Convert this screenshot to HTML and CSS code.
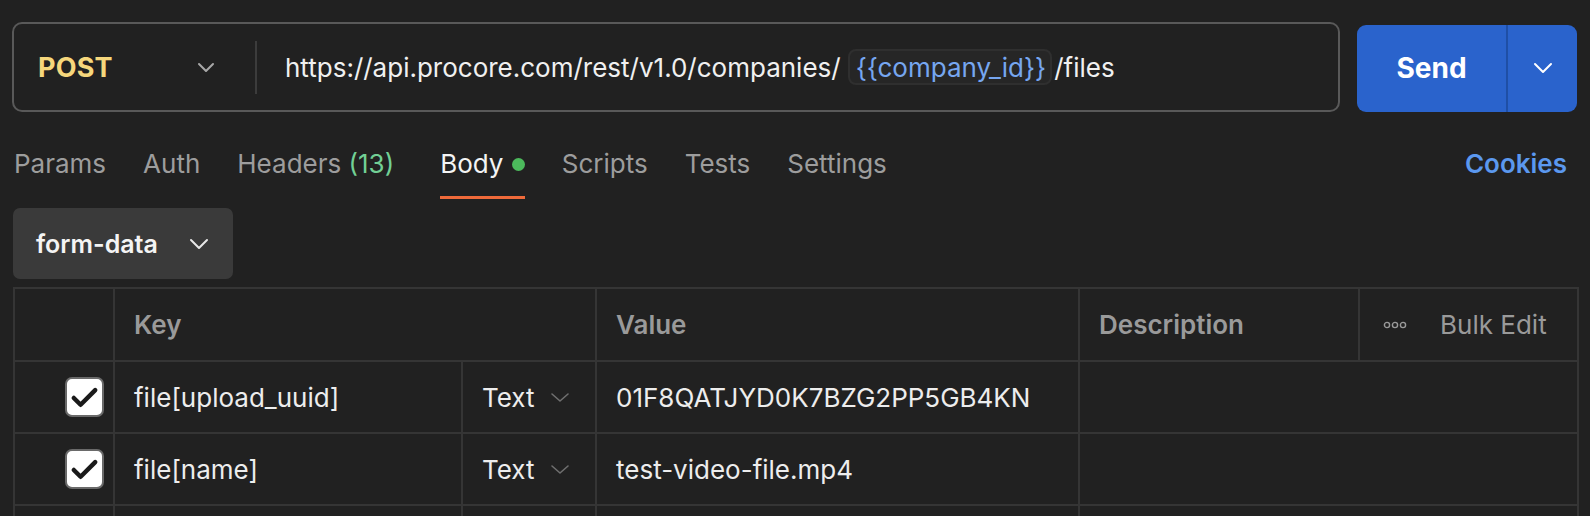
FILE: index.html
```html
<!DOCTYPE html>
<html>
<head>
<meta charset="utf-8">
<link rel="stylesheet" href="styles.css">
</head>
<body>
<div class="top">
  <div class="urlbar">
    <div class="method">
      <span class="method-name">POST</span>
      <svg class="chev" width="18" height="11" viewBox="0 0 18 11"><polyline points="2,2 9,9 16,2" fill="none" stroke="#a8a8a8" stroke-width="2" stroke-linecap="round" stroke-linejoin="round"/></svg>
    </div>
    <div class="vdiv"></div>
    <div class="url">
      <span>https://api.procore.com/rest/v1.0/companies/</span><span class="var">{{company_id}}</span><span>/files</span>
    </div>
  </div>
  <div class="send">
    <div class="send-main">Send</div>
    <div class="send-arrow">
      <svg width="20" height="12" viewBox="0 0 20 12"><polyline points="2,2 10,10 18,2" fill="none" stroke="#ffffff" stroke-width="2" stroke-linecap="round" stroke-linejoin="round"/></svg>
    </div>
  </div>
</div>

<div class="tabs">
  <div class="tab">Params</div>
  <div class="tab">Auth</div>
  <div class="tab">Headers <span class="count">(13)</span></div>
  <div class="tab active">Body <span class="dot"></span></div>
  <div class="tab">Scripts</div>
  <div class="tab">Tests</div>
  <div class="tab">Settings</div>
  <div class="spacer"></div>
  <div class="cookies">Cookies</div>
</div>

<div class="mode">
  <span>form-data</span>
  <svg width="20" height="12" viewBox="0 0 20 12"><polyline points="2,2 10,10 18,2" fill="none" stroke="#e8e8e8" stroke-width="2" stroke-linecap="round" stroke-linejoin="round"/></svg>
</div>

<table class="grid">
  <colgroup>
    <col class="c-check">
    <col class="c-key">
    <col class="c-type">
    <col class="c-value">
    <col class="c-desc">
    <col class="c-bulk">
  </colgroup>
  <tr class="head">
    <th></th>
    <th colspan="2">Key</th>
    <th>Value</th>
    <th>Description</th>
    <th class="bulk">
      <div class="bulk-inner">
        <svg width="24" height="8" viewBox="0 0 24 8"><circle cx="4" cy="4" r="2.6" fill="none" stroke="#9a9a9a" stroke-width="1.4"/><circle cx="12" cy="4" r="2.6" fill="none" stroke="#9a9a9a" stroke-width="1.4"/><circle cx="20" cy="4" r="2.6" fill="none" stroke="#9a9a9a" stroke-width="1.4"/></svg>
        <span>Bulk Edit</span>
      </div>
    </th>
  </tr>
  <tr class="row">
    <td class="check"><span class="box"><svg width="36" height="36" viewBox="0 0 36 36"><polyline points="7,19 14,26 29,11" fill="none" stroke="#1a1a1a" stroke-width="4.6" stroke-linecap="round" stroke-linejoin="round"/></svg></span></td>
    <td>file[upload_uuid]</td>
    <td><div class="type"><span>Text</span><svg width="20" height="11" viewBox="0 0 20 11"><polyline points="2,2 10,9 18,2" fill="none" stroke="#6f6f6f" stroke-width="1.6" stroke-linecap="round" stroke-linejoin="round"/></svg></div></td>
    <td>01F8QATJYD0K7BZG2PP5GB4KN</td>
    <td colspan="2"></td>
  </tr>
  <tr class="row">
    <td class="check"><span class="box"><svg width="36" height="36" viewBox="0 0 36 36"><polyline points="7,19 14,26 29,11" fill="none" stroke="#1a1a1a" stroke-width="4.6" stroke-linecap="round" stroke-linejoin="round"/></svg></span></td>
    <td>file[name]</td>
    <td><div class="type"><span>Text</span><svg width="20" height="11" viewBox="0 0 20 11"><polyline points="2,2 10,9 18,2" fill="none" stroke="#6f6f6f" stroke-width="1.6" stroke-linecap="round" stroke-linejoin="round"/></svg></div></td>
    <td>test-video-file.mp4</td>
    <td colspan="2"></td>
  </tr>
  <tr class="row">
    <td></td>
    <td></td>
    <td></td>
    <td></td>
    <td colspan="2"></td>
  </tr>
</table>
</body>
</html>
```

FILE: styles.css
```css
html, body {
  margin: 0;
  padding: 0;
  background: #212121;
  overflow: hidden;
}
body {
  font-family: Inter, "Noto Sans", "Liberation Sans", sans-serif;
  color: #ececec;
  width: 1590px;
  height: 516px;
}

.top {
  display: flex;
  align-items: center;
  padding: 22px 13px 0 12px;
  gap: 17px;
}
.urlbar {
  flex: 1;
  height: 90px;
  box-sizing: border-box;
  border: 2px solid #595959;
  border-radius: 10px;
  display: flex;
  align-items: center;
}
.method {
  width: 201px;
  box-sizing: border-box;
  padding-left: 24px;
  display: flex;
  align-items: center;
  justify-content: space-between;
}
.method-name {
  color: #f6d77c;
  font-weight: 700;
  font-size: 27px;
  letter-spacing: 0.2px;
}
.chev { display: block; }
.vdiv {
  width: 2px;
  height: 53px;
  background: #3c3c3c;
  margin-left: 40px;
}
.url {
  margin-left: 28px;
  font-size: 26px;
  color: #f0f0f0;
  display: flex;
  align-items: center;
  white-space: nowrap;
}
.var {
  color: #76a6f0;
  background: #262626;
  border: 2px solid #2f2f2f;
  border-radius: 8px;
  height: 36px;
  box-sizing: border-box;
  display: inline-flex;
  align-items: center;
  padding: 0 4px 0 6px;
  margin: 0 2px 0 7px;
}

.send {
  width: 220px;
  height: 87px;
  display: flex;
  border-radius: 9px;
  overflow: hidden;
  background: #2a63cc;
  margin-top: 2px;
}
.send-main {
  width: 149px;
  display: flex;
  align-items: center;
  justify-content: center;
  color: #ffffff;
  font-weight: 700;
  font-size: 28px;
}
.send-arrow {
  flex: 1;
  border-left: 2px solid #1f4fa6;
  display: flex;
  align-items: center;
  justify-content: center;
}

.tabs {
  display: flex;
  align-items: flex-start;
  margin-top: 36px;
  padding: 0 23px 0 14px;
  gap: 37px;
}
.tab {
  font-size: 26px;
  line-height: 32px;
  color: #9d9d9d;
  padding-bottom: 16px;
  border-bottom: 3px solid transparent;
  display: flex;
  align-items: center;
  white-space: pre;
}
.tab .count {
  color: #72d095;
}
.tab.active {
  color: #f4f4f4;
  border-bottom-color: #ef6a3a;
  margin-left: 9px;
}
.dot {
  display: inline-block;
  width: 13px;
  height: 13px;
  border-radius: 50%;
  background: #4cba5c;
  margin-left: 1px;
}
.spacer { flex: 1; }
.cookies {
  font-size: 26px;
  line-height: 32px;
  color: #5b98ef;
  font-weight: 600;
}

.mode {
  margin: 9px 0 0 13px;
  width: 220px;
  height: 71px;
  box-sizing: border-box;
  background: #3a3a3a;
  border-radius: 7px;
  display: flex;
  align-items: center;
  padding-left: 23px;
  gap: 31px;
  font-size: 25px;
  font-weight: 600;
  color: #f4f4f4;
}

.grid {
  margin: 8px 0 0 13px;
  width: 1564px;
  table-layout: fixed;
  border-collapse: collapse;
  font-size: 26px;
}
.c-check { width: 100px; }
.c-key { width: 348px; }
.c-type { width: 134px; }
.c-value { width: 483px; }
.c-desc { width: 280px; }
.c-bulk { width: 219px; }

.grid th, .grid td {
  border: 2px solid #353535;
  padding: 0 0 0 19px;
  text-align: left;
  white-space: nowrap;
  overflow: hidden;
}
.head th {
  height: 71px;
  color: #9a9a9a;
  font-weight: 600;
}
.head th.bulk {
  padding-left: 23px;
}
.bulk-inner {
  display: flex;
  align-items: center;
  gap: 33px;
  font-weight: 400;
}
.bulk-inner svg { display: block; }
.row td {
  height: 70px;
  color: #ededed;
}
.row td.check {
  padding: 0 9px 0 0;
  text-align: right;
}
.box {
  display: inline-flex;
  align-items: center;
  justify-content: center;
  width: 39px;
  height: 40px;
  box-sizing: border-box;
  background: #ffffff;
  border: 2px solid #6a6a6a;
  border-radius: 7px;
  vertical-align: middle;
}
.box svg { display: block; }
.type {
  display: flex;
  align-items: center;
  gap: 15px;
}
.type svg { display: block; }
```
